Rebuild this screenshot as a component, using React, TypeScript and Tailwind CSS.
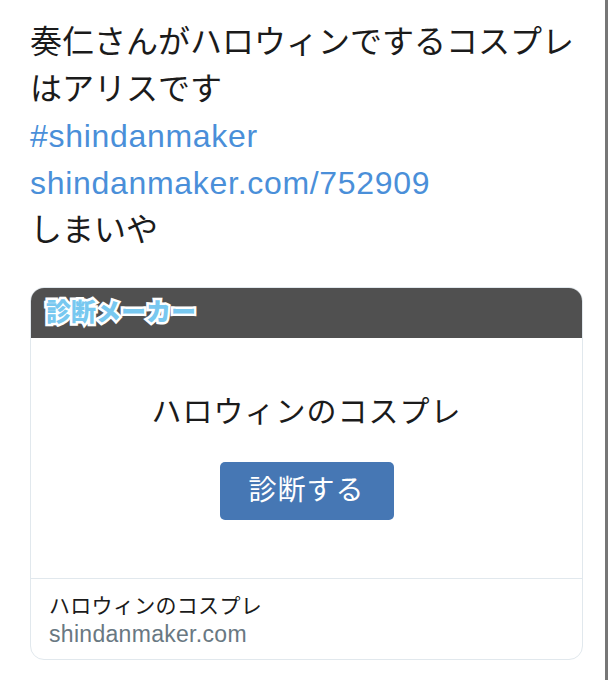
const jp = "font-['Liberation_Sans','Noto_Sans_CJK_JP',sans-serif]";

export default function App() {
  return (
    <div className={`flex h-[680px] w-[613px] bg-white ${jp}`}>
      <div className="w-[605px] pl-[30px] pt-[19px]">
        {/* Tweet text */}
        <div className="text-[32px] leading-[47px] text-[#1b1b1b]">
          <div>奏仁さんがハロウィンでするコスプレ</div>
          <div>はアリスです</div>
          <div className="text-[#4a8fd9] tracking-[0.7px]">#shindanmaker</div>
          <div className="text-[#4a8fd9] tracking-[0.7px]">shindanmaker.com/752909</div>
          <div>しまいや</div>
        </div>

        {/* Card */}
        <div className="mt-[33px] w-[553px] overflow-hidden rounded-[14px] border border-[#e1e8ed]">
          <div className="flex h-[50px] items-center bg-[#505050] px-[15px]">
            <span className="text-[25px] font-black text-[#78c8f0] [paint-order:stroke_fill] [-webkit-text-stroke:5px_white]">
              診断メーカー
            </span>
          </div>

          <div className="flex h-[240px] flex-col items-center pt-[54px]">
            <div className="text-[30px] leading-[40px] text-[#1b1b1b] tracking-[1px]">ハロウィンのコスプレ</div>
            <button className="mt-[30px] h-[58px] w-[174px] rounded-[5px] bg-[#4677b4] text-[28px] text-white tracking-[1px]">
              診断する
            </button>
          </div>

          <div className="border-t border-[#e1e8ed] px-[18px] pb-[11px] pt-[13px]">
            <div className="text-[21px] leading-[28px] text-[#1b1b1b] tracking-[0.3px]">ハロウィンのコスプレ</div>
            <div className="text-[23px] leading-[28px] text-[#697882] tracking-[0.3px]">shindanmaker.com</div>
          </div>
        </div>
      </div>
      <div className="w-[3px] bg-[#777777]" />
    </div>
  );
}
